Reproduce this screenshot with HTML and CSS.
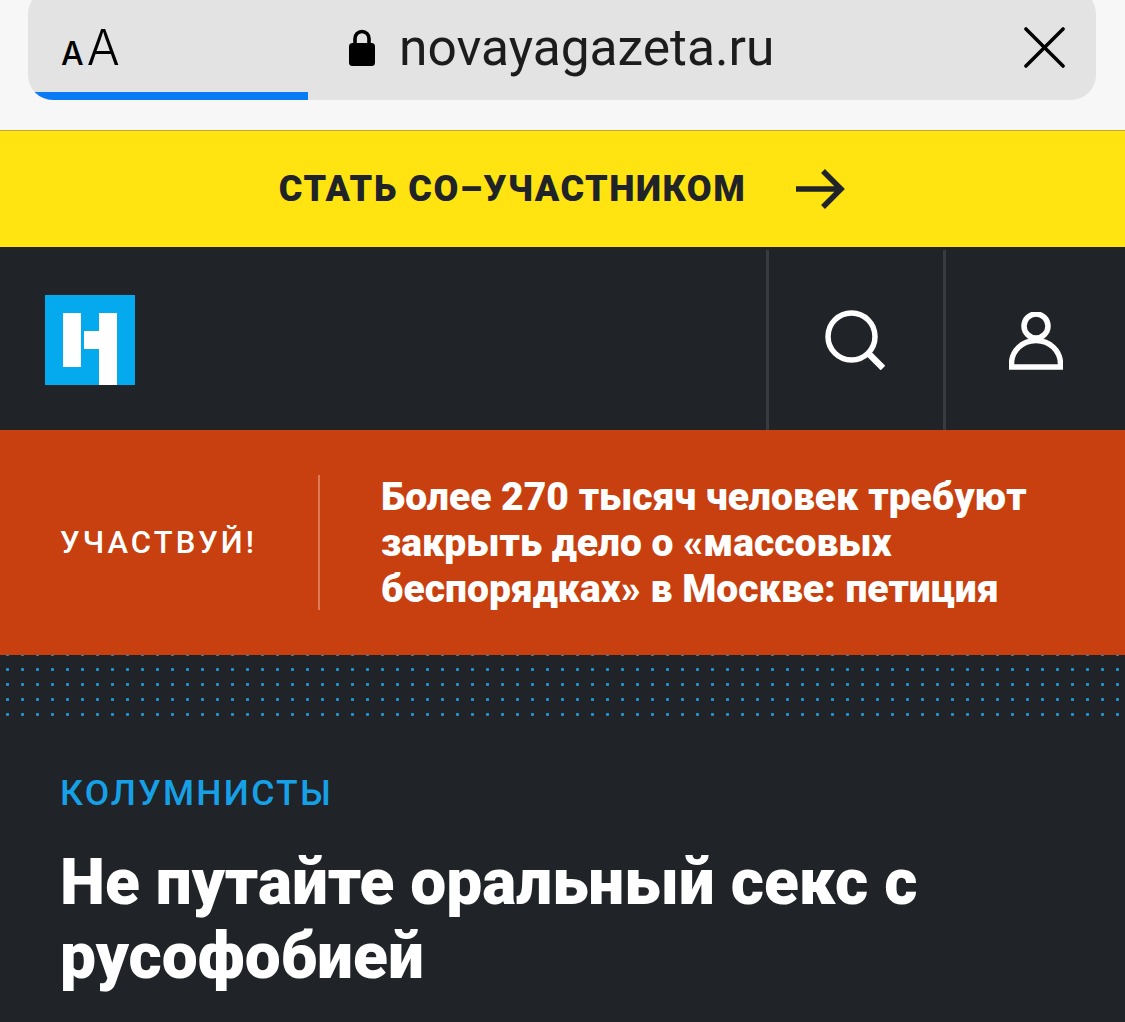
FILE: index.html
```html
<!DOCTYPE html>
<html lang="ru">
<head>
<meta charset="utf-8">
<title>Новая газета</title>
<link rel="stylesheet" href="styles.css">
</head>
<body>
<div class="browser">
  <div class="pill">
    <div class="aa"><span class="aa-s">A</span><span class="aa-b">A</span></div>
    <div class="addr">
      <svg class="lock" width="28" height="38" viewBox="0 0 28 38"><path d="M7 17V10.500a7 7 0 0 1 14 0V17" fill="none" stroke="#000" stroke-width="3.600"/><rect x="1" y="15" width="26" height="23" rx="3.500" fill="#000"/></svg>
      <span class="url">novayagazeta.ru</span>
    </div>
    <svg class="close" width="42" height="42" viewBox="0 0 42 42"><path d="M2 2L40 40M40 2L2 40" stroke="#000" stroke-width="3.600" stroke-linecap="round"/></svg>
    <div class="progress"></div>
  </div>
</div>
<a class="promo"><span>СТАТЬ СО–УЧАСТНИКОМ</span>
  <svg width="50" height="42" viewBox="0 0 50 42"><path d="M0 21H45M27 3L45 21L27 39" fill="none" stroke="#202328" stroke-width="5.500"/></svg>
</a>
<header class="head">
  <svg class="logo" width="90" height="90" viewBox="0 0 90 90"><rect width="90" height="90" fill="#04a9ee"/><path d="M18 18H36V72H18ZM54 18H72V90H54V54H39V36H54Z" fill="#fff"/></svg>
  <div class="cell">
    <svg width="60" height="60" viewBox="0 0 60 60"><circle cx="26.500" cy="26.500" r="23.500" fill="none" stroke="#fff" stroke-width="5.500"/><path d="M42 42L58 58" stroke="#fff" stroke-width="6.500"/></svg>
  </div>
  <div class="cell">
    <svg width="54" height="58" viewBox="0 0 54 58"><circle cx="27" cy="14" r="12" fill="none" stroke="#fff" stroke-width="5.500"/><path d="M2.500 55V52C2.500 39 13 28.500 27 28.500S51.500 39 51.500 52V55Z" fill="none" stroke="#fff" stroke-width="5.500"/></svg>
  </div>
</header>
<section class="alert">
  <div class="tag">УЧАСТВУЙ!</div>
  <div class="news">Более 270 тысяч человек требуют закрыть дело о «массовых беспорядках» в Москве: петиция</div>
</section>
<div class="dots"></div>
<main class="article">
  <div class="rubric">КОЛУМНИСТЫ</div>
  <h1 class="title">Не путайте оральный секс с русофобией</h1>
</main>
</body>
</html>
```
FILE: styles.css
```css
* { box-sizing: border-box; }
html, body { margin: 0; height: 1022px; overflow: hidden; }
body { background: #202328; font-family: Roboto, "Liberation Sans", sans-serif; }
.browser { display: flow-root; height: 131px; background: #f7f7f7; border-bottom: 1px solid #bfa92e; padding: 0 29px 0 28px; }
.pill { position: relative; height: 111px; margin-top: -11px; background: #e3e3e3; border-radius: 25px; display: flex; align-items: center; padding: 11px 31px 4px 33px; overflow: hidden; }
.aa { width: 287px; color: #000; font-family: Inter, sans-serif; line-height: 1; display: flex; align-items: baseline; padding-bottom: 1px; }
.aa-s { font-size: 32px; font-weight: 500; }
.aa-b { font-size: 49px; font-weight: 300; margin-left: 3px; }
.addr { display: flex; align-items: center; gap: 23px; flex: 1; }
.lock { margin-top: -2px; }
.url { font-family: Roboto, sans-serif; font-size: 51.500px; color: #1c1c1c; line-height: 1; margin-top: -1px; }
.close { width: 41px; height: 41px; margin-top: -1px; }
.progress { position: absolute; left: 0; bottom: 0; width: 280px; height: 8px; background: #0a7bf5; }
.promo { height: 116px; background: #ffe412; display: flex; align-items: center; justify-content: center; gap: 50px; color: #202328; font-size: 36px; font-weight: 900; letter-spacing: 1.500px; }
.head { height: 183px; background: #202328; display: flex; align-items: center; padding: 0 0 0 45px; }
.logo { margin-right: auto; margin-top: 2px; }
.cell { width: 177px; height: 180px; margin-top: 3px; border-left: 3px solid #383b42; display: flex; align-items: center; justify-content: center; padding-right: 2px; }
.cell + .cell { width: 182px; padding: 2px 0 0; }
.alert { height: 225px; background: #c83f10; display: flex; align-items: center; padding-left: 60px; color: #fff; }
.tag { width: 260px; height: 135px; border-right: 2px solid #de7a55; display: flex; align-items: center; font-size: 31px; font-weight: 500; letter-spacing: 3.100px; }
.news { width: 700px; margin-left: 61px; font-size: 39px; font-weight: 900; line-height: 46px; }
.dots { height: 62px; background-image: radial-gradient(circle, #2394d0 1.300px, transparent 1.800px); background-size: 15px 15px; background-position: 0 7px; }
.article { padding: 54px 60px 0; }
.rubric { color: #16a0e6; font-size: 35.500px; font-weight: 500; letter-spacing: 2.300px; line-height: 44px; }
.title { margin: 31px 0 0; color: #fff; font-size: 64px; font-weight: 900; line-height: 74px; }
```
